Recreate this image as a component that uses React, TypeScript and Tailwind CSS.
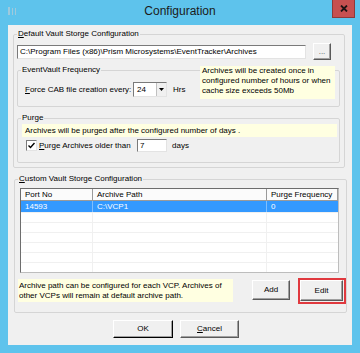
import type { ReactNode } from 'react'

// ── Small building blocks ─────────────────────────────────────────────────────

function Group({ label, className = '', children }: { label: ReactNode; className?: string; children: ReactNode }) {
  return (
    <fieldset className={`border border-[#d5d5d5] rounded-[2px] ${className}`}>
      <legend className="ml-[3px] px-[1px] leading-[10px]">{label}</legend>
      {children}
    </fieldset>
  )
}

function Btn({ children, className = '' }: { children: ReactNode; className?: string }) {
  return (
    <div
      className={`flex items-center justify-center bg-[#f0f0f0] border border-t-white border-l-white border-r-[#5a5a5a] border-b-[#5a5a5a] shadow-[inset_-1px_-1px_0_#a0a0a0] ${className}`}
    >
      {children}
    </div>
  )
}

const sunken = 'bg-white border border-t-[#7a7a7a] border-l-[#7a7a7a] border-r-[#e3e3e3] border-b-[#e3e3e3]'
const tip = 'bg-[#ffffe1]'

const U = ({ c }: { c: string }) => <span className="underline underline-offset-[1px]">{c}</span>

// ── Dialog ────────────────────────────────────────────────────────────────────

export default function App() {
  return (
    <div className="w-[360px] h-[353px] bg-[#5ec3ec] flex flex-col font-['Liberation_Sans',Arial,sans-serif] text-[8px] text-black">
      {/* Title bar */}
      <div className="h-[25px] flex items-start shrink-0">
        <div className="w-[50px] h-[22px] flex items-center pl-[8px]">
          <svg width="10" height="8" viewBox="0 0 10 8">
            <rect x="0" y="0" width="2" height="8" fill="#9fc9dc" />
            <rect x="4" y="1" width="1" height="7" fill="#9fc9dc" />
            <rect x="7" y="1" width="1" height="7" fill="#9fc9dc" />
          </svg>
        </div>
        <div className="flex-1 h-[22px] flex items-center justify-center text-[12px] text-[#1b1b1b]">
          Configuration
        </div>
        <div className="w-[50px] flex justify-end pr-[5px]">
          <div className="w-[23px] h-[18px] bg-[#c75050] border border-[#8e3a3a] border-t-0 flex items-center justify-center">
            <svg width="8" height="7" viewBox="0 0 8 7">
              <path d="M1 0.5 L7 6.5 M7 0.5 L1 6.5" stroke="#1f1414" strokeWidth="1.8" />
            </svg>
          </div>
        </div>
      </div>

      {/* Client area */}
      <div className="flex-1 mx-[8px] mb-[8px] bg-[#f0f0f0] flex flex-col">
        <Group
          label={<><U c="D" />efault Vault Storge Configuration</>}
          className="mt-[4px] ml-[5px] mr-[7px]"
        >
          <div className="pb-[4px]">
            <div className="mt-[4px] pl-[3px] flex items-center">
              <div className={`${sunken} w-[289px] h-[14px] flex items-center pl-[2px] leading-none`}>
                C:\Program Files (x86)\Prism Microsystems\EventTracker\Archives
              </div>
              <Btn className="ml-[7px] w-[18px] h-[17px] text-[#555]">...</Btn>
            </div>

            <Group label="EventVault Frequency" className="mt-[5px] ml-[3px] mr-[4px]">
              <div className="h-[31px] flex items-start">
                <div className="mt-[7px] pl-[7px] flex items-center">
                  <span className="w-[108px]"><U c="F" />orce CAB file creation every:</span>
                  <div className={`${sunken} w-[34px] h-[15px] flex items-center`}>
                    <span className="flex-1 pl-[3px]">24</span>
                    <div className="w-[10px] h-[13px] bg-[#f0f0f0] border-l border-[#c0c0c0] flex items-center justify-center">
                      <svg width="5" height="3" viewBox="0 0 5 3">
                        <path d="M0 0 H5 L2.5 3 Z" fill="#000" />
                      </svg>
                    </div>
                  </div>
                  <span className="ml-[6px]">Hrs</span>
                </div>
                <div className={`${tip} ml-auto mr-[4px] mt-[-9px] w-[135px] h-[33px] pl-[2px] leading-[10px]`}>
                  Archives will be created once in
                  <br />
                  configured number of hours or when
                  <br />
                  cache size exceeds 50Mb
                </div>
              </div>
            </Group>

            <Group label="Purge" className="mt-[6px] ml-[3px] mr-[4px]">
              <div className="h-[38px]">
                <div className={`${tip} mt-[1px] ml-[4px] mr-[2px] h-[13px] pl-[3px] leading-[13px]`}>
                  Archives will be purged after the configured number of days .
                </div>
                <div className="mt-[2px] h-[13px] flex items-center">
                  <div className={`${sunken} ml-[8px] w-[11px] h-[11px] flex items-center justify-center`}>
                    <svg width="7" height="7" viewBox="0 0 7 7">
                      <path d="M0.5 3.5 L2.5 5.5 L6.5 1" stroke="#000" strokeWidth="1.4" fill="none" />
                    </svg>
                  </div>
                  <span className="ml-[2px] w-[98px]"><U c="P" />urge Archives older than</span>
                  <div className={`${sunken} w-[30px] h-[13px] flex items-center pl-[2px]`}>7</div>
                  <span className="ml-[5px]">days</span>
                </div>
              </div>
            </Group>
          </div>
        </Group>

        <Group
          label={<><U c="C" />ustom Vault Storge Configuration</>}
          className="mt-[6px] ml-[6px] mr-[6px]"
        >
          <div className="pb-[8px]">
            <div className="mt-[4px] ml-[5px] mr-[7px] h-[85px] bg-white border border-t-[#6d6d6d] border-l-[#6d6d6d] border-r-[#bdbdbd] border-b-[#bdbdbd] flex flex-col">
              <div className="h-[12px] grid grid-cols-[72px_174px_1fr] border-b border-[#9a9a9a] bg-[#fbfbfb]">
                <div className="pl-[4px] leading-[12px] border-r border-[#9a9a9a]">Port No</div>
                <div className="pl-[4px] leading-[12px] border-r border-[#9a9a9a]">Archive Path</div>
                <div className="pl-[4px] leading-[12px] border-r border-[#9a9a9a]">Purge Frequency</div>
              </div>
              <div className="h-[11px] grid grid-cols-[72px_174px_1fr] bg-[#3399ff] text-white">
                <div className="pl-[4px] leading-[11px] border-r border-[#7fbfff]">14593</div>
                <div className="pl-[4px] leading-[11px] border-r border-[#7fbfff]">C:\VCP1</div>
                <div className="pl-[4px] leading-[11px]">0</div>
              </div>
              {[1, 2, 3, 4, 5, 6].map(i => (
                <div key={i} className="h-[10px] grid grid-cols-[72px_174px_1fr] border-t border-[#f0f0f0]">
                  <div className="border-r border-[#f0f0f0]" />
                  <div className="border-r border-[#f0f0f0]" />
                  <div />
                </div>
              ))}
            </div>

            <div className="mt-[6px] flex items-start">
              <div className={`${tip} ml-[3px] w-[215px] h-[23px] pl-[1px] pt-[2px] leading-[10px]`}>
                Archive path can be configured for each VCP. Archives of
                <br />
                other VCPs will remain at default archive path.
              </div>
              <Btn className="ml-[19px] mt-[1px] w-[38px] h-[20px]">Add</Btn>
              <div className="ml-[8px] mt-[-1px] w-[48px] h-[26px] border-2 border-[#e0393e] flex items-start">
                <Btn className="w-[43px] h-[21px]">Edit</Btn>
              </div>
            </div>
          </div>
        </Group>

        <div className="mt-[7px] ml-[105px] flex">
          <Btn className="w-[60px] h-[18px] border-r-black border-b-black">OK</Btn>
          <Btn className="ml-[7px] w-[59px] h-[18px]"><U c="C" />ancel</Btn>
        </div>
      </div>
    </div>
  )
}
